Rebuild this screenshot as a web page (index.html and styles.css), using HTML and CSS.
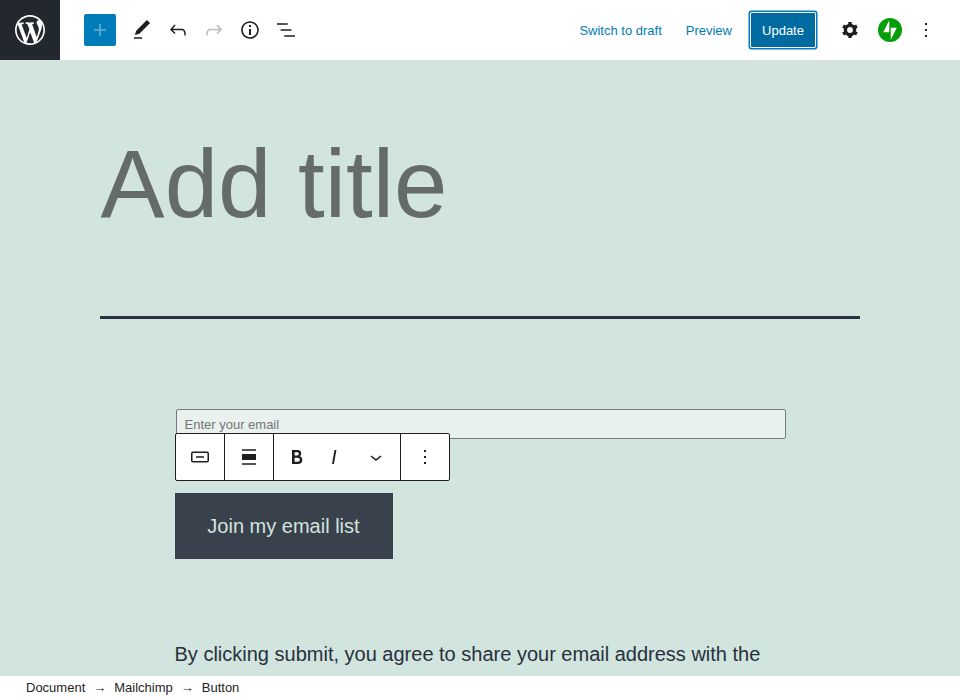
FILE: index.html
```html
<!DOCTYPE html>
<html lang="en">
<head>
<meta charset="utf-8">
<title>Edit page</title>
<link rel="stylesheet" href="styles.css">
</head>
<body>
<div class="editor">
  <header class="header">
    <a class="wp-home" aria-label="View pages">
      <svg width="36" height="36" viewBox="-2 -2 24 24"><path d="M20 10c0-5.51-4.49-10-10-10C4.48 0 0 4.49 0 10c0 5.52 4.48 10 10 10 5.51 0 10-4.48 10-10zM7.78 15.37L4.37 6.22c.55-.02 1.17-.08 1.17-.08.5-.06.44-1.13-.06-1.11 0 0-1.45.11-2.37.11-.18 0-.37 0-.58-.01C4.12 2.69 6.87 1.11 10 1.11c2.33 0 4.45.87 6.05 2.34-.68-.11-1.65.39-1.65 1.58 0 .74.45 1.36.9 2.1.35.61.55 1.36.55 2.46 0 1.49-1.4 5-1.4 5l-3.03-8.37c.54-.02.82-.17.82-.17.5-.05.44-1.25-.06-1.22 0 0-1.44.12-2.38.12-.87 0-2.33-.12-2.33-.12-.5-.03-.56 1.2-.06 1.22l.92.08 1.26 3.41zM17.41 10c.24-.64.74-1.87.43-4.25.7 1.29 1.05 2.71 1.05 4.25 0 3.29-1.73 6.24-4.4 7.78.97-2.59 1.94-5.2 2.92-7.78zM6.1 18.09C3.12 16.65 1.11 13.53 1.11 10c0-1.3.23-2.48.72-3.59C3.25 10.3 4.67 14.2 6.1 18.09zm4.03-6.63l2.58 6.98c-.86.29-1.76.45-2.71.45-.79 0-1.57-.11-2.29-.33.81-2.38 1.62-4.74 2.42-7.1z"/></svg>
    </a>
    <div class="tools">
      <span class="inserter"><svg class="icon" viewBox="0 0 24 24"><path d="M18 11.2h-5.2V6h-1.6v5.2H6v1.6h5.2V18h1.6v-5.2H18z"/></svg></span>
      <svg class="icon" viewBox="0 0 24 24"><path d="M20.1 5.1L16.9 2 6.2 12.7l-1.3 4.4 4.5-1.3L20.1 5.1zM4 20.8h8v-1.5H4v1.5z"/></svg>
      <svg class="icon" viewBox="0 0 24 24"><path d="M18.3 11.7c-.6-.6-1.4-.9-2.3-.9H6.7l2.9-3.3-1.1-1-4.5 5L8.5 16l1-1-2.7-2.7H16c.5 0 .9.2 1.3.5 1 1 1 3.4 1 4.5v.3h1.5v-.2c0-1.5 0-4.3-1.5-5.7z"/></svg>
      <svg class="icon icon--disabled" viewBox="0 0 24 24"><path d="M15.6 6.5l-1.1 1 2.9 3.3H8c-.9 0-1.7.3-2.3.9-1.4 1.5-1.4 4.2-1.4 5.6v.2h1.5v-.3c0-1.1 0-3.5 1-4.5.3-.3.7-.5 1.3-.5h9.2L14.5 15l1.1 1.1 4.6-4.6-4.6-5z"/></svg>
      <svg class="icon" viewBox="0 0 24 24"><path d="M12 3.2c-4.8 0-8.8 3.9-8.8 8.8 0 4.8 3.9 8.8 8.8 8.8 4.8 0 8.8-3.9 8.8-8.8 0-4.8-4-8.8-8.8-8.8zm0 16c-4 0-7.2-3.3-7.2-7.2C4.8 8 8 4.8 12 4.8s7.2 3.3 7.2 7.2c0 4-3.2 7.2-7.2 7.2zM11 17h2v-6h-2v6zm0-8h2V7h-2v2z"/></svg>
      <svg class="icon" viewBox="0 0 24 24"><path d="M13.8 5.2H3v1.5h10.8V5.2zm-3.6 12v1.500H21v-1.500H10.200zm7.200-6H6.600v1.500h10.800v-1.500z"/></svg>
    </div>
    <div class="settings">
      <a class="link">Switch to draft</a>
      <a class="link">Preview</a>
      <button class="update" type="button">Update</button>
      <svg class="icon cog" viewBox="0 0 24 24"><circle cx="12" cy="12" r="4.600"/><path d="M12 4v3M12 17v3M18.930 8l-2.600 1.500M7.670 14.500L5.070 16M18.930 16l-2.600-1.500M7.670 9.500L5.070 8"/></svg>
      <svg class="icon jetpack" viewBox="0 0 32 32"><circle cx="16" cy="16" r="16" fill="#069e08"/><path fill="#fff" d="M15 19H7l8-16zM17 29V13h8z"/></svg>
      <svg class="icon" viewBox="0 0 24 24"><path d="M13 19h-2v-2h2v2zm0-6h-2v-2h2v2zm0-6h-2V5h2v2z"/></svg>
    </div>
  </header>

  <main class="canvas">
    <h1 class="title">Add title</h1>
    <section class="form">
      <div class="email">Enter your email</div>
      <div class="toolbar">
        <div class="group"><svg class="icon" viewBox="0 0 24 24"><path d="M19 6.5H5c-1.1 0-2 .9-2 2v7c0 1.1.9 2 2 2h14c1.1 0 2-.9 2-2v-7c0-1.1-.9-2-2-2zm.5 9c0 .3-.2.5-.5.5H5c-.3 0-.5-.2-.5-.5v-7c0-.3.2-.5.5-.5h14c.3 0 .5.2.5.5v7zM8 12.8h8v-1.5H8v1.5z"/></svg></div>
        <div class="group"><svg class="icon" viewBox="0 0 24 24"><path d="M5 9v6h14V9H5zm0-4.8v1.5h14V4.2H5zm0 15.6h14v-1.5H5v1.5z"/></svg></div>
        <div class="group group--format">
          <svg class="icon" viewBox="0 0 24 24"><path d="M14.7 11.3c1-.6 1.5-1.6 1.5-3 0-2.3-1.3-3.4-4-3.4H7v14h5.8c1.4 0 2.5-.3 3.3-1 .8-.7 1.2-1.7 1.2-2.9.1-1.9-.8-3.1-2.6-3.7zm-5.1-4h2.3c.6 0 1.1.1 1.4.4.3.3.5.7.5 1.2s-.2 1-.5 1.2c-.3.3-.8.4-1.4.4H9.6V7.3zm4.6 9c-.4.3-1 .4-1.7.4H9.6v-3.9h2.9c.7 0 1.3.2 1.7.5.4.3.6.8.6 1.5s-.2 1.2-.6 1.5z"/></svg>
          <svg class="icon" viewBox="0 0 24 24"><path d="M12.5 5L10 19h1.9l2.5-14z"/></svg>
          <svg class="icon chevron" viewBox="0 0 24 24"><path d="M17.5 11.6L12 16l-5.5-4.4.9-1.2L12 14l4.5-3.6 1 1.2z"/></svg>
        </div>
        <div class="group"><svg class="icon" viewBox="0 0 24 24"><path d="M13 19h-2v-2h2v2zm0-6h-2v-2h2v2zm0-6h-2V5h2v2z"/></svg></div>
      </div>
      <div class="join">Join my email list</div>
      <p class="consent">By clicking submit, you agree to share your email address with the</p>
    </section>
  </main>

  <footer class="breadcrumb">
    <span>Document</span><span class="arrow">→</span><span>Mailchimp</span><span class="arrow">→</span><span>Button</span>
  </footer>
</div>
</body>
</html>
```
FILE: styles.css
```css
* {
  box-sizing: border-box;
}

body {
  margin: 0;
  font-family: "Liberation Sans", Arial, sans-serif;
  font-size: 13px;
  color: #1e1e1e;
}

.editor {
  display: flex;
  flex-direction: column;
  height: 700px;
  overflow: hidden;
}

.icon {
  display: block;
  flex: none;
  width: 24px;
  height: 24px;
  fill: #1e1e1e;
}

.icon--disabled {
  opacity: 0.3;
}

.header {
  display: flex;
  flex: none;
  align-items: flex-start;
  height: 61px;
  background: #fff;
  border-bottom: 1px solid #e0e0e0;
}

.wp-home {
  display: flex;
  align-items: center;
  justify-content: center;
  width: 60px;
  height: 60px;
  background: #23282e;
  fill: #fff;
}

.tools {
  display: flex;
  align-items: center;
  gap: 12px;
  height: 60px;
  padding-left: 24px;
}

.inserter {
  display: flex;
  align-items: center;
  justify-content: center;
  width: 32px;
  height: 32px;
  margin-right: 2px;
  background: #007cba;
  border-radius: 2px;
}

.inserter .icon {
  fill: #66b0d6;
}

.settings {
  display: flex;
  align-items: center;
  height: 60px;
  margin-left: auto;
  padding-right: 22px;
}

.link {
  margin-right: 24px;
  color: #007cba;
  white-space: nowrap;
}

.update {
  width: 64px;
  height: 34px;
  margin: 0 23px 0 -5px;
  padding: 0;
  border: 0;
  border-radius: 1px;
  background: #006ba1;
  box-shadow: 0 0 0 1px #fff, 0 0 0 2.5px #007cba;
  color: #fff;
  font: inherit;
}

.cog {
  fill: none;
  stroke: #1e1e1e;
  stroke-width: 3.4px;
}

.jetpack {
  margin: 0 12px 0 16px;
}

.canvas {
  flex: 1;
  min-height: 0;
  overflow: hidden;
  padding: 69px 100px 0;
  background: #d1e4dd;
}

.title {
  height: 189px;
  margin: 0;
  border-bottom: 3px solid #28303d;
  color: #656b68;
  font-size: 96px;
  font-weight: 400;
  line-height: 108px;
  text-indent: 0.6px;
}

.form {
  position: relative;
  width: 611px;
  margin: 90px 0 0 75px;
}

.email {
  height: 30px;
  margin-left: 1px;
  padding-left: 7.5px;
  border: 1px solid #757b78;
  border-radius: 2px;
  background: #e8f1ee;
  color: #757575;
  line-height: 29px;
}

.toolbar {
  position: absolute;
  top: 24px;
  left: 0;
  display: flex;
  height: 48px;
  border: 1px solid #1e1e1e;
  border-radius: 2px;
  background: #fff;
}

.group {
  display: flex;
  align-items: center;
  justify-content: center;
  width: 49px;
  border-right: 1px solid #1e1e1e;
}

.group:last-child {
  width: 48px;
  border-right: 0;
}

.group--format {
  justify-content: flex-start;
  gap: 13px;
  width: 127px;
  padding-left: 11px;
}

.chevron {
  margin-left: 5px;
}

.join {
  width: 218px;
  height: 66px;
  margin-top: 54px;
  padding-right: 1px;
  background: #39414d;
  color: #d1e4dd;
  font-size: 20px;
  line-height: 66px;
  text-align: center;
}

.consent {
  margin: 78px 0 0 -0.5px;
  color: #28303d;
  font-size: 20px;
  line-height: 34px;
  white-space: nowrap;
}

.breadcrumb {
  display: flex;
  flex: none;
  align-items: center;
  height: 24px;
  padding: 0 0 2px 26px;
  background: #fff;
}

.arrow {
  margin: 0 8px;
}
```
